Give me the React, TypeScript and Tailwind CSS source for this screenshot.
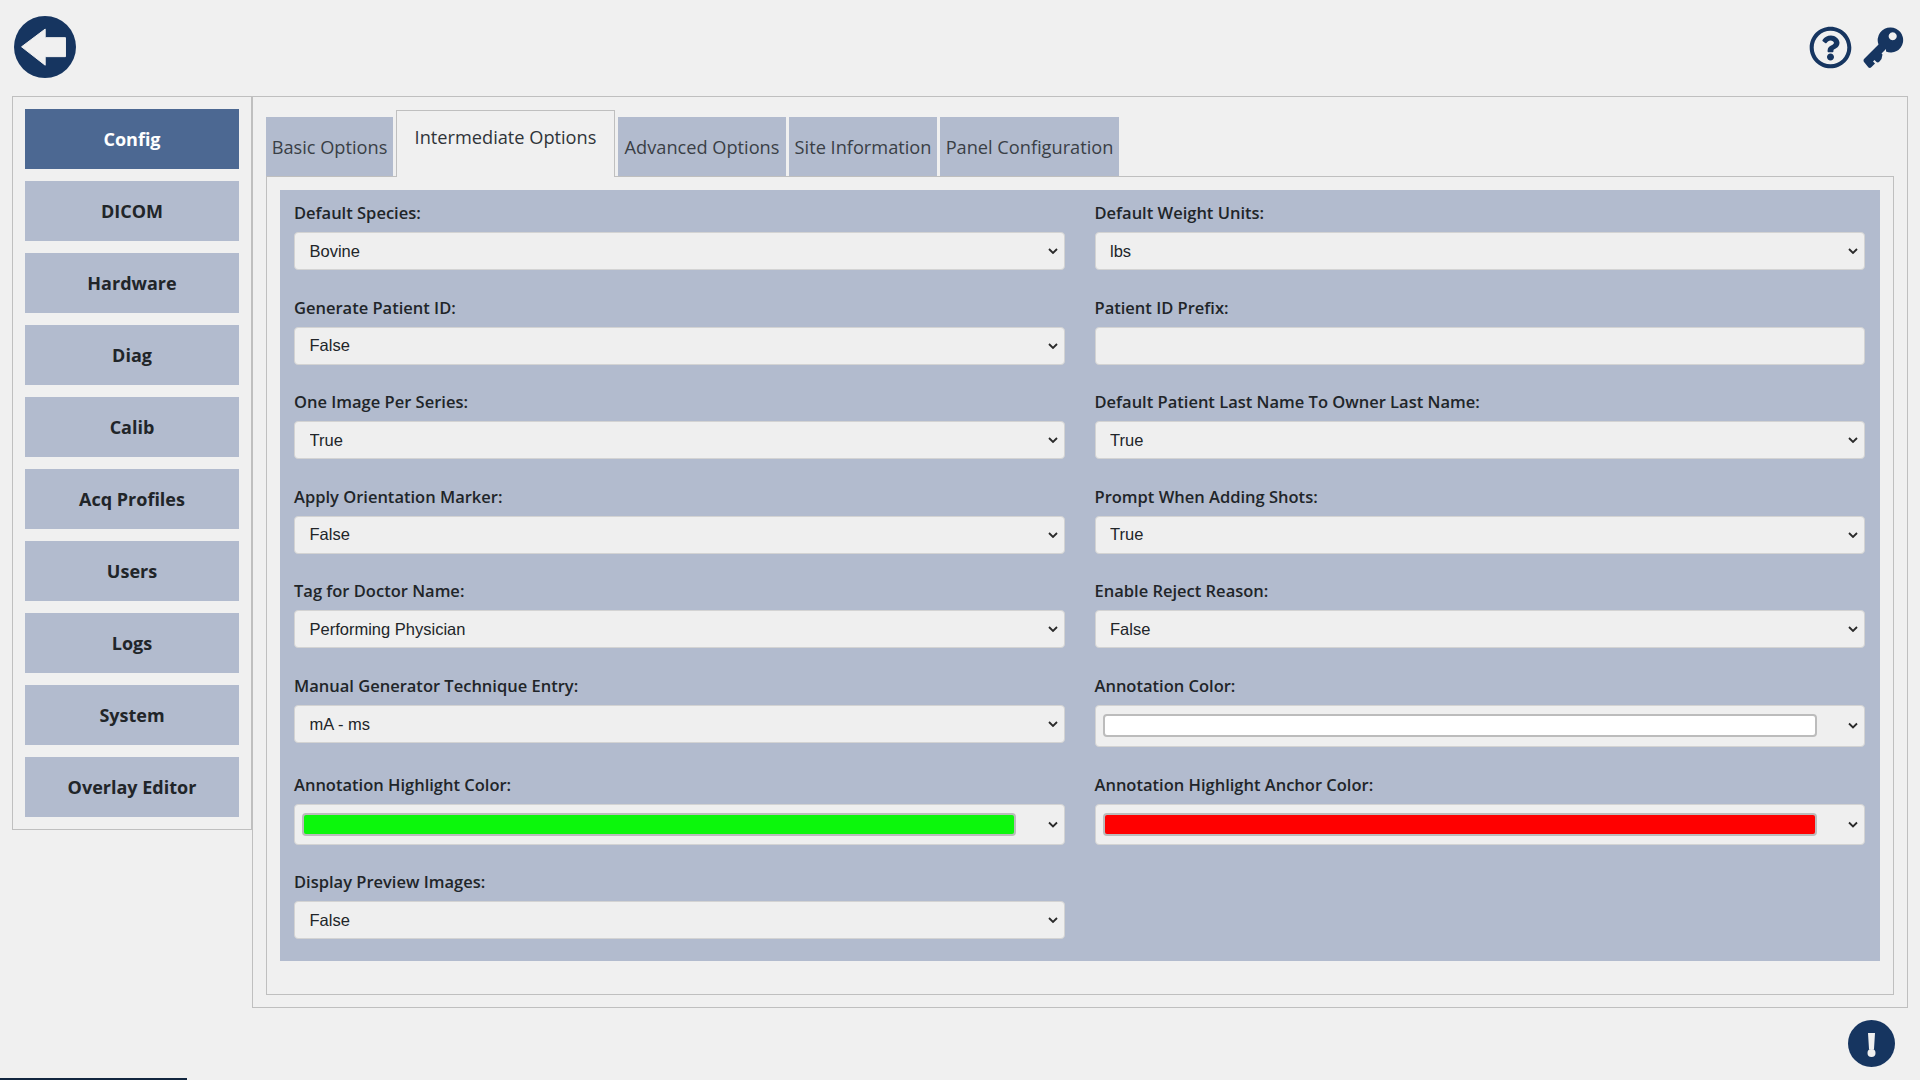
import { FaRegQuestionCircle } from "react-icons/fa";

const UI_FONT = "font-['Open_Sans','Noto_Sans',sans-serif]";

const NAV = ["Config", "DICOM", "Hardware", "Diag", "Calib", "Acq Profiles", "Users", "Logs", "System", "Overlay Editor"];

const TABS = [
  { name: "Basic Options", w: "w-[127px]" },
  { name: "Intermediate Options", w: "w-[219px]", active: true },
  { name: "Advanced Options", w: "w-[168px]" },
  { name: "Site Information", w: "w-[148px]" },
  { name: "Panel Configuration", w: "w-[179px]" },
];

function Chevron() {
  return (
    <svg viewBox="0 0 10 7" className="h-[7px] w-[10px] shrink-0" aria-hidden="true">
      <path d="M1 1.500l4 4 4-4" fill="none" stroke="#2a2a2a" strokeWidth="1.800" />
    </svg>
  );
}

function Field({ label, children }: { label: string; children: React.ReactNode }) {
  return (
    <div>
      <label className={`mb-[7px] block text-[16.500px] font-semibold leading-[24px] text-[#212529] ${UI_FONT}`}>{label}</label>
      {children}
    </div>
  );
}

function Picker({ value, options }: { value: string; options?: string[] }) {
  const opts = options ?? ["True", "False"];
  return (
    <div className="relative">
      <select
        defaultValue={value}
        className="block h-[38px] w-full appearance-none rounded-[4px] border border-[#d3d3d3] bg-[#efefef] pl-[14.500px] pr-[24px] font-['Liberation_Sans',Arial,sans-serif] text-[16.500px] text-[#212529]"
      >
        {opts.map((o) => (
          <option key={o}>{o}</option>
        ))}
      </select>
      <span className="pointer-events-none absolute right-[7px] top-1/2 flex -translate-y-1/2">
        <Chevron />
      </span>
    </div>
  );
}

function ColorPicker({ swatch, tall }: { swatch: string; tall?: boolean }) {
  return (
    <div
      className={`flex w-full items-center justify-between rounded-[4px] border border-[#d3d3d3] bg-[#efefef] pl-[7px] pr-[6px] ${tall ? "h-[42px]" : "h-[41px]"}`}
    >
      <div className={`h-[23px] w-[714px] rounded-[4px] border-2 border-[#bcbcbc] ${swatch}`} />
      <Chevron />
    </div>
  );
}

export default function App() {
  return (
    <div className="relative min-h-screen w-full overflow-hidden bg-[#f0f0f0] text-[#212529]">
      <header className="flex h-[96px] items-start justify-between pl-[14px] pr-[16px]">
        <button type="button" className="mt-[16px]" aria-label="Back">
          <svg viewBox="0 0 63 63" className="h-[62px] w-[62px]">
            <circle cx="31.500" cy="31.500" r="31.500" fill="#163560" />
            <path d="M7.700 31.300L31.700 13.300V22H52.300V41.300H31.700V50Z" fill="#f0f0f0" stroke="#f0f0f0" strokeLinejoin="round" />
          </svg>
        </button>
        <div className="mt-[26px] flex items-center gap-[10px]">
          <FaRegQuestionCircle className="h-[43px] w-[43px] text-[#163560]" />
          <svg viewBox="0 0 42 42" className="h-[42px] w-[42px]" aria-label="Key">
            <path
              fillRule="evenodd"
              d="M28.700.500a12.500 12.500 0 1 1-4.700 24.100L24 22l-4.500 4.500 1 1-1 4.500-2 2.500q-1.500 1.500-3 .500l-2-2-1.500 1.500 2 2-3.500 3.500q-1.500 1.500-3 .500L2 35q-1-1.500 0-3L16.500 17.500A12.500 12.500 0 0 1 28.700.500ZM30.700 5.300a4 4 0 1 0 .010 0Z"
              fill="#163560"
            />
          </svg>
        </div>
      </header>

      <div className="flex items-start pl-[12px]">
        <nav className="flex h-[734px] w-[240px] flex-col gap-[12px] border border-[#bfbfbf] p-[12px]">
          {NAV.map((item, i) => (
            <button
              key={item}
              type="button"
              className={`h-[60px] shrink-0 text-[18px] font-bold ${UI_FONT} ${i === 0 ? "bg-[#4c6892] text-white" : "bg-[#b2bbce] text-[#212529]"}`}
            >
              {item}
            </button>
          ))}
        </nav>

        <main className="flex h-[912px] w-[1656px] flex-col border border-[#bfbfbf] pb-[12px] pl-[13px] pr-[13px] pt-[13px]">
          <div className="relative z-10 -mb-px flex h-[67px] shrink-0 items-end gap-[3px]">
            {TABS.map((t) =>
              t.active ? (
                <div
                  key={t.name}
                  className={`${t.w} h-[67px] border border-b-0 border-[#bfbfbf] bg-[#f0f0f0] pt-[11px] text-center text-[18.200px] leading-[30px] text-[#2f3439] ${UI_FONT}`}
                >
                  {t.name}
                </div>
              ) : (
                <div
                  key={t.name}
                  className={`${t.w} h-[60px] border-b border-[#bfbfbf] bg-[#b2bbce] pt-[15px] text-center text-[18.200px] leading-[30px] text-[#3a3f46] ${UI_FONT}`}
                >
                  {t.name}
                </div>
              ),
            )}
          </div>

          <div className="flex-1 border border-[#bfbfbf] px-[13px] pt-[13px]">
            <div className="grid grid-cols-2 gap-x-[30px] gap-y-[25.600px] bg-[#b2bbce] pb-[22px] pl-[14px] pr-[15px] pt-[11px]">
              <Field label="Default Species:">
                <Picker value="Bovine" options={["Bovine", "Canine", "Equine", "Feline"]} />
              </Field>
              <Field label="Default Weight Units:">
                <Picker value="lbs" options={["lbs", "kg"]} />
              </Field>
              <Field label="Generate Patient ID:">
                <Picker value="False" />
              </Field>
              <Field label="Patient ID Prefix:">
                <input
                  type="text"
                  className="block h-[38px] w-full rounded-[4px] border border-[#d3d3d3] bg-[#efefef] px-[12px] text-[16px]"
                />
              </Field>
              <Field label="One Image Per Series:">
                <Picker value="True" />
              </Field>
              <Field label="Default Patient Last Name To Owner Last Name:">
                <Picker value="True" />
              </Field>
              <Field label="Apply Orientation Marker:">
                <Picker value="False" />
              </Field>
              <Field label="Prompt When Adding Shots:">
                <Picker value="True" />
              </Field>
              <Field label="Tag for Doctor Name:">
                <Picker value="Performing Physician" options={["Performing Physician", "Referring Physician"]} />
              </Field>
              <Field label="Enable Reject Reason:">
                <Picker value="False" />
              </Field>
              <Field label="Manual Generator Technique Entry:">
                <Picker value="mA - ms" options={["mA - ms", "mAs"]} />
              </Field>
              <Field label="Annotation Color:">
                <ColorPicker swatch="bg-white" tall />
              </Field>
              <Field label="Annotation Highlight Color:">
                <ColorPicker swatch="bg-[#0cf70c]" />
              </Field>
              <Field label="Annotation Highlight Anchor Color:">
                <ColorPicker swatch="bg-[#ff0000]" />
              </Field>
              <Field label="Display Preview Images:">
                <Picker value="False" />
              </Field>
            </div>
          </div>
        </main>
      </div>

      <footer className="flex justify-end pr-[25px] pt-[12px]">
        <svg viewBox="0 0 47 47" className="h-[47px] w-[47px]" aria-label="Alerts">
          <circle cx="23.500" cy="23.500" r="23.500" fill="#163560" />
          <path d="M20 13h7l-1 16.500h-5Z" fill="#f0f0f0" />
          <circle cx="23.500" cy="33" r="4" fill="#f0f0f0" />
        </svg>
      </footer>

      <div className="absolute bottom-0 left-0 h-[2px] w-[187px] bg-[#12263f]" />
    </div>
  );
}
